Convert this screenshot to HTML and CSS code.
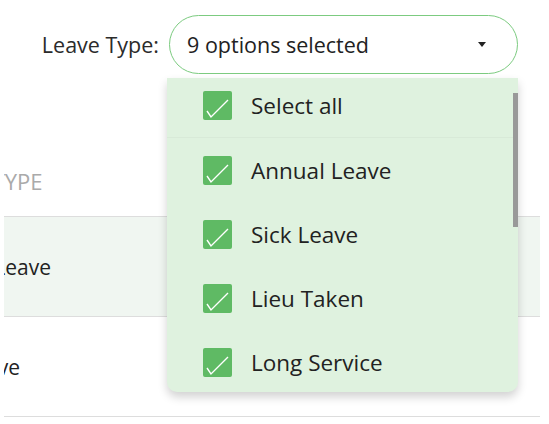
FILE: index.html
```html
<!DOCTYPE html>
<html lang="en">
<head>
    <meta charset="UTF-8">
    <meta name="viewport" content="width=device-width, initial-scale=1.0">
    <title>Leave Type Filter</title>
    <link rel="stylesheet" href="styles.css">
</head>
<body>
    <div class="page">
        <div class="filter-bar">
            <label class="filter-label">Leave Type:</label>
            <div class="select-wrap">
                <div class="select">
                    <span>9 options selected</span>
                    <span class="caret"></span>
                </div>
                <div class="dropdown">
                    <div class="option option-all">
                        <span class="check"><svg viewBox="0 0 29 29"><path d="M4 20 L8 26 L25 9"/></svg></span>
                        <span>Select all</span>
                    </div>
                    <div class="option">
                        <span class="check"><svg viewBox="0 0 29 29"><path d="M4 20 L8 26 L25 9"/></svg></span>
                        <span>Annual Leave</span>
                    </div>
                    <div class="option">
                        <span class="check"><svg viewBox="0 0 29 29"><path d="M4 20 L8 26 L25 9"/></svg></span>
                        <span>Sick Leave</span>
                    </div>
                    <div class="option">
                        <span class="check"><svg viewBox="0 0 29 29"><path d="M4 20 L8 26 L25 9"/></svg></span>
                        <span>Lieu Taken</span>
                    </div>
                    <div class="option">
                        <span class="check"><svg viewBox="0 0 29 29"><path d="M4 20 L8 26 L25 9"/></svg></span>
                        <span>Long Service</span>
                    </div>
                    <div class="scrollbar"></div>
                </div>
            </div>
        </div>

        <div class="table">
            <div class="row row-head"><span class="cell">Leave Type</span></div>
            <div class="row row-alt"><span class="cell">Annual Leave</span></div>
            <div class="row"><span class="cell">Sick Leave</span></div>
        </div>
    </div>
</body>
</html>
```

FILE: styles.css
```css
html, body {
    margin: 0;
    height: 100%;
    overflow: hidden;
    background: #fff;
}
body {
    font-family: 'Open Sans', 'Noto Sans', sans-serif;
    color: #333;
}
.page {
    width: 549px;
    height: 424px;
    position: relative;
}
.filter-bar {
    display: flex;
    justify-content: flex-end;
    align-items: center;
    gap: 10px;
    padding: 15px 31px 0 0;
    position: relative;
    z-index: 2;
}
.filter-label {
    font-size: 21.5px;
    color: #2b2b2b;
}
.select-wrap {
    position: relative;
}
.select {
    box-sizing: border-box;
    width: 349px;
    height: 59px;
    border: 1.5px solid #7ccb80;
    border-radius: 30px;
    display: flex;
    align-items: center;
    justify-content: space-between;
    padding: 0 31px 0 17px;
    font-size: 21.5px;
    color: #222;
    background: #fff;
}
.caret {
    width: 0;
    height: 0;
    border-left: 4px solid transparent;
    border-right: 4px solid transparent;
    border-top: 5px solid #222;
}
.dropdown {
    position: absolute;
    top: 63px;
    left: -2px;
    width: 351px;
    height: 314px;
    overflow: hidden;
    background: #dff2df;
    border-radius: 0 0 10px 10px;
    box-shadow: 0 5px 10px rgba(0, 0, 0, 0.18);
}
.option {
    display: flex;
    align-items: center;
    gap: 19px;
    height: 64px;
    padding-left: 36px;
    font-size: 22.5px;
    color: #222;
}
.option-all {
    height: 54px;
    padding-bottom: 5px;
    border-bottom: 1px solid rgba(0, 0, 0, 0.03);
}
.check {
    flex: none;
    width: 29px;
    height: 29px;
    background: #5fba64;
    border-radius: 2px;
    display: flex;
    overflow: hidden;
}
.check svg {
    width: 29px;
    height: 29px;
    fill: none;
    stroke: #fff;
    stroke-width: 1.4;
}
.scrollbar {
    position: absolute;
    top: 15px;
    right: 0;
    width: 5px;
    height: 134px;
    background: #999;
}
.table {
    margin: 72px 9px 0 4px;
    overflow: hidden;
}
.row {
    height: 99px;
    border-top: 1px solid #ddd;
    display: flex;
    align-items: center;
    font-size: 21px;
    color: #222;
}
.row:last-child {
    border-bottom: 1px solid #ddd;
}
.row-head {
    height: 70px;
    border-top: none;
    font-size: 22px;
    text-transform: uppercase;
    color: #aaa;
}
.row-alt {
    background: #f0f6f1;
}
.cell {
    margin-left: -84px;
    white-space: nowrap;
}
.row-head .cell {
    margin-left: -80px;
}
```
